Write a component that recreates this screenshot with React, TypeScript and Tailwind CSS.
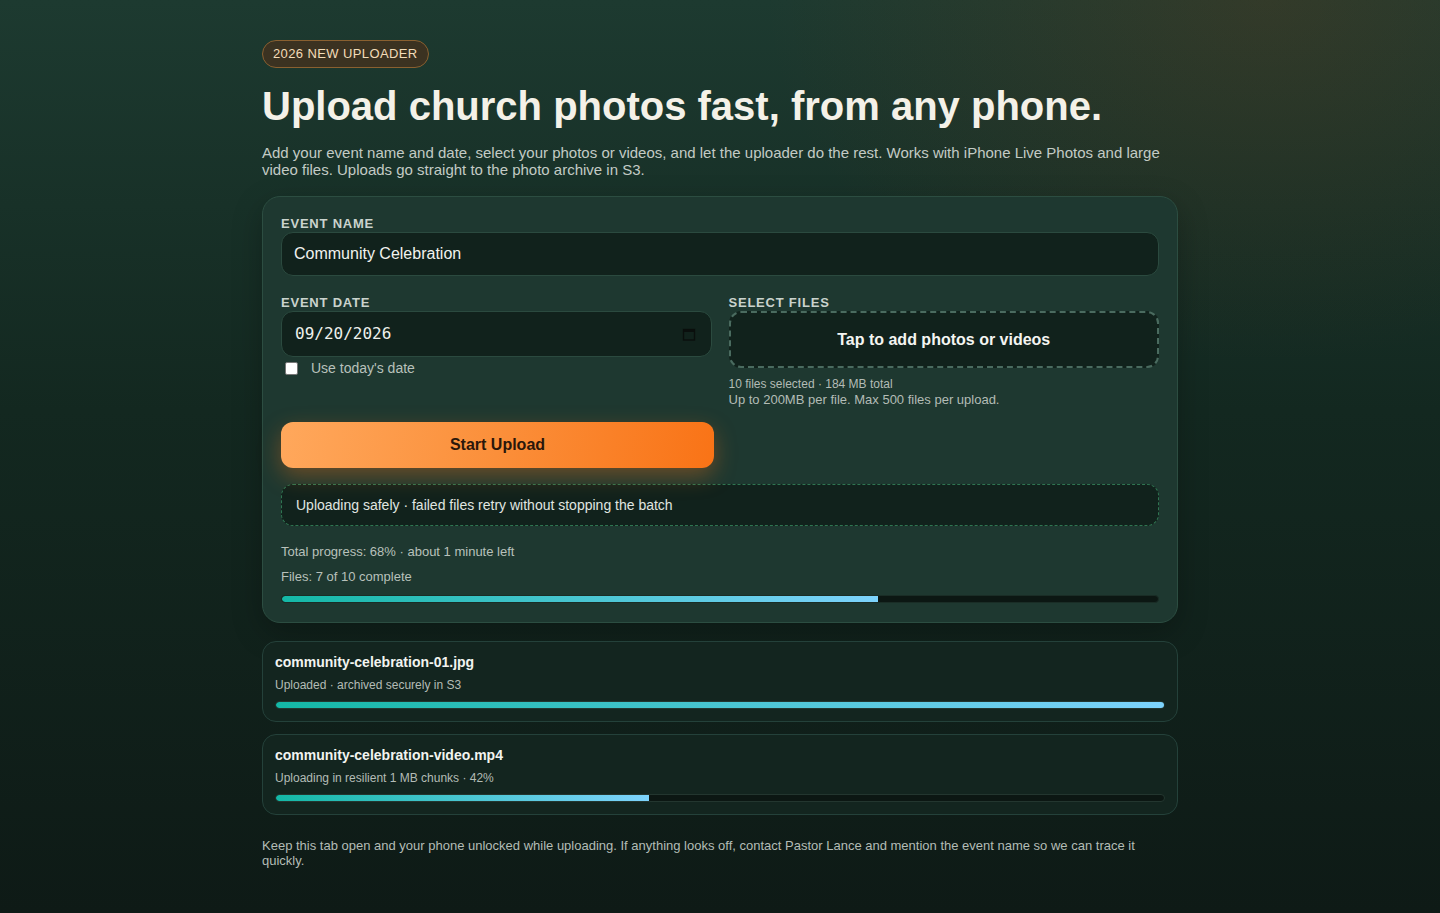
const files = [
  { name: "community-celebration-01.jpg", status: "Uploaded · archived securely in S3", pct: 100 },
  { name: "community-celebration-video.mp4", status: "Uploading in resilient 1 MB chunks · 42%", pct: 42 },
];

export default function App() {
  return (
    <div className="min-h-screen w-full bg-[radial-gradient(ellipse_at_88%_0%,rgba(140,60,15,0.2),transparent_28%),linear-gradient(180deg,#1d3a30_0%,#132820_45%,#0e1a16_100%)] font-['Liberation_Sans',Arial,sans-serif] text-[#eef1ec]">
      <div className="mx-auto w-[916px] pt-10 pb-11">
        <span className="inline-block rounded-full border border-[#8a6030] bg-[#3b3221] px-[10px] py-[5px] text-[13px] leading-4 tracking-[0.03em] text-[#f3dcb8]">
          2026 NEW UPLOADER
        </span>
        <h1 className="mt-[14px] text-[40px] font-bold leading-[48px] text-[#f4f1e8]">
          Upload church photos fast, from any phone.
        </h1>
        <p className="mt-[14px] text-[15px] leading-[17px] text-[#c3cbc5]">
          Add your event name and date, select your photos or videos, and let the uploader do the rest. Works with iPhone Live Photos and large video files. Uploads go straight to the photo archive in S3.
        </p>

        {/* Upload form card */}
        <section className="mt-[18px] rounded-[18px] border border-[#2c4d41] bg-[#1e3830] px-[18px] pt-[19px] pb-[19px] shadow-[0_10px_30px_rgba(0,0,0,0.25)]">
          <label className="block text-[13px] font-bold leading-4 tracking-[0.06em] text-[#cad3cd]">EVENT NAME</label>
          <div className="flex h-[44px] items-center rounded-[12px] border border-[#2b4a3f] bg-[#11221c] px-3 text-[16px] text-[#f1f3ef]">
            Community Celebration
          </div>

          <div className="mt-[19px] grid grid-cols-2 gap-[17px]">
            <div>
              <label className="block text-[13px] font-bold leading-4 tracking-[0.06em] text-[#cad3cd]">EVENT DATE</label>
              <div className="flex h-[46px] items-center justify-between rounded-[12px] border border-[#2b4a3f] bg-[#11221c] pl-[13px] pr-[15px]">
                <span className="font-['DejaVu_Sans_Mono',monospace] text-[16px] text-[#eef1ec]">09/20/2026</span>
                <svg width="14" height="14" viewBox="0 0 14 14">
                  <rect x="1.5" y="2.5" width="11" height="10.5" fill="none" stroke="#0a0f0d" strokeWidth="1.4" />
                  <rect x="1.5" y="2.5" width="11" height="2.5" fill="#0a0f0d" />
                </svg>
              </div>
              <label className="mt-[1px] flex items-center gap-[13px] pl-[4px] text-[14px] leading-[20px] text-[#b8c1bb]">
                <span className="inline-block h-[13px] w-[13px] rounded-[2px] border border-[#767676] bg-white" />
                Use today's date
              </label>
            </div>
            <div>
              <label className="block text-[13px] font-bold leading-4 tracking-[0.06em] text-[#cad3cd]">SELECT FILES</label>
              <div className="flex h-[57px] items-center justify-center rounded-[12px] border-2 border-dashed border-[#4a6b5f] bg-[#11221c] text-[16px] font-bold text-[#f4f5f1]">
                Tap to add photos or videos
              </div>
              <p className="mt-[9px] text-[12px] leading-[15px] text-[#b3bcb6]">10 files selected · 184 MB total</p>
              <p className="text-[13px] leading-[15px] text-[#b3bcb6]">Up to 200MB per file. Max 500 files per upload.</p>
            </div>
          </div>

          <button className="mt-[15px] h-[46px] w-[433px] rounded-[12px] bg-[linear-gradient(100deg,#ffa85c_0%,#fb8f3a_50%,#f97316_100%)] text-[16px] font-bold text-[#2a170b] shadow-[0_8px_22px_rgba(249,115,22,0.35)]">
            Start Upload
          </button>

          <div className="mt-[16px] flex h-[42px] items-center rounded-[12px] border border-dashed border-[#2f7651] bg-[#11221c] px-[14px] text-[14px] text-[#e0e6e1]">
            Uploading safely · failed files retry without stopping the batch
          </div>

          <p className="mt-[18px] text-[13px] leading-4 text-[#b8c1bb]">Total progress: 68% · about 1 minute left</p>
          <p className="mt-[9px] text-[13px] leading-4 text-[#b8c1bb]">Files: 7 of 10 complete</p>
          <div className="mt-[10px] h-2 w-full overflow-hidden rounded-full border border-[#1a2d26] bg-[#0c1713]">
            <div className="h-full rounded-l-full bg-[linear-gradient(90deg,#14b8a6,#7dd3fc)]" style={{ width: "68%" }} />
          </div>
        </section>

        {/* Per-file progress */}
        <div className="mt-[18px] flex flex-col gap-[12px]">
          {files.map((f) => (
            <div key={f.name} className="rounded-[14px] border border-[#24413a] bg-[#13251f] px-[12px] pt-[12px] pb-[12px]">
              <p className="text-[14px] font-bold leading-4 text-[#f2f4f0]">{f.name}</p>
              <p className="mt-[7px] text-[12px] leading-4 text-[#b3bcb6]">{f.status}</p>
              <div className="mt-[8px] h-2 w-full overflow-hidden rounded-full border border-[#23362f] bg-[#0c1713]">
                <div className="h-full rounded-l-full bg-[linear-gradient(90deg,#14b8a6,#7dd3fc)]" style={{ width: `${f.pct}%` }} />
              </div>
            </div>
          ))}
        </div>

        <p className="mt-[23px] text-[13px] leading-[15px] text-[#b3bcb6]">
          Keep this tab open and your phone unlocked while uploading. If anything looks off, contact Pastor Lance and mention the event name so we can trace it quickly.
        </p>
      </div>
    </div>
  );
}
